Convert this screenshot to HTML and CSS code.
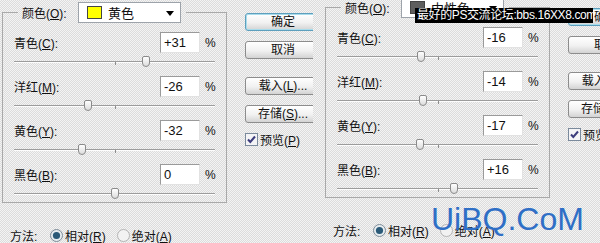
FILE: index.html
```html
<!DOCTYPE html>
<html lang="zh-CN">
<head>
  <meta charset="UTF-8">
  <title>可选颜色</title>
  <link rel="stylesheet" href="styles.css">
</head>
<body>

<div class="shot">
  <!-- first dialog: yellows -->
  <div class="pane pane-left">
    <div class="dlg">
      <div class="dlg-top">
        <fieldset class="group">
          <legend class="group-head">
            <span class="head-lbl">颜色(<u>O</u>):</span>
            <span class="combo"><i class="swatch swatch-yellow"></i><span class="combo-text">黄色</span><b class="combo-arrow"></b></span>
          </legend>
          <div class="row"><span class="lbl">青色(<u>C</u>):</span><span class="num">+31</span><span class="pct">%</span></div>
          <div class="slider"><i class="tick"></i><i class="thumb" style="left:65.5%"></i></div>
          <div class="row"><span class="lbl">洋红(<u>M</u>):</span><span class="num">-26</span><span class="pct">%</span></div>
          <div class="slider"><i class="tick"></i><i class="thumb" style="left:37%"></i></div>
          <div class="row"><span class="lbl">黄色(<u>Y</u>):</span><span class="num">-32</span><span class="pct">%</span></div>
          <div class="slider"><i class="tick"></i><i class="thumb" style="left:34%"></i></div>
          <div class="row"><span class="lbl">黑色(<u>B</u>):</span><span class="num">0</span><span class="pct">%</span></div>
          <div class="slider"><i class="tick"></i><i class="thumb" style="left:50%"></i></div>
        </fieldset>
        <div class="btns">
          <div class="btn btn-default">确定</div>
          <div class="btn">取消</div>
          <div class="btn btn-gap">载入(<u>L</u>)...</div>
          <div class="btn">存储(<u>S</u>)...</div>
          <div class="check">
            <svg class="box" width="13" height="13" viewBox="0 0 13 13"><rect x="0.5" y="0.5" width="12" height="12" fill="#f4f4f6" stroke="#7b8a9c"/><path d="M3 6.5 L5.3 9 L10 3.5" fill="none" stroke="#3c3c7c" stroke-width="2"/></svg>
            <span>预览(<u>P</u>)</span>
          </div>
        </div>
      </div>
      <div class="method">
        <span class="method-lbl">方法:</span>
        <svg class="radio" width="13" height="13" viewBox="0 0 13 13"><circle cx="6.5" cy="6.5" r="6" fill="#e6ecef" stroke="#7d8b97"/><circle cx="6.5" cy="6.5" r="3.6" fill="#2b5a78"/></svg>
        <span>相对(<u>R</u>)</span>
        <svg class="radio radio-2" width="13" height="13" viewBox="0 0 13 13"><circle cx="6.5" cy="6.5" r="6" fill="#f2f2f2" stroke="#b4b4b4"/></svg>
        <span>绝对(<u>A</u>)</span>
      </div>
    </div>
  </div>

  <!-- second dialog: neutrals -->
  <div class="pane pane-right">
    <div class="dlg dlg-shift">
      <div class="dlg-top">
        <fieldset class="group">
          <legend class="group-head">
            <span class="head-lbl">颜色(<u>O</u>):</span>
            <span class="combo"><i class="swatch swatch-gray"></i><span class="combo-text">中性色</span><b class="combo-arrow"></b></span>
          </legend>
          <div class="row"><span class="lbl">青色(<u>C</u>):</span><span class="num">-16</span><span class="pct">%</span></div>
          <div class="slider"><i class="tick"></i><i class="thumb" style="left:42%"></i></div>
          <div class="row"><span class="lbl">洋红(<u>M</u>):</span><span class="num">-14</span><span class="pct">%</span></div>
          <div class="slider"><i class="tick"></i><i class="thumb" style="left:43%"></i></div>
          <div class="row"><span class="lbl">黄色(<u>Y</u>):</span><span class="num">-17</span><span class="pct">%</span></div>
          <div class="slider"><i class="tick"></i><i class="thumb" style="left:41.5%"></i></div>
          <div class="row"><span class="lbl">黑色(<u>B</u>):</span><span class="num">+16</span><span class="pct">%</span></div>
          <div class="slider"><i class="tick"></i><i class="thumb" style="left:58%"></i></div>
        </fieldset>
        <div class="btns">
          <div class="btn btn-default">确定</div>
          <div class="btn">取消</div>
          <div class="btn btn-gap">载入(<u>L</u>)...</div>
          <div class="btn">存储(<u>S</u>)...</div>
          <div class="check">
            <svg class="box" width="13" height="13" viewBox="0 0 13 13"><rect x="0.5" y="0.5" width="12" height="12" fill="#f4f4f6" stroke="#7b8a9c"/><path d="M3 6.5 L5.3 9 L10 3.5" fill="none" stroke="#3c3c7c" stroke-width="2"/></svg>
            <span>预览(<u>P</u>)</span>
          </div>
        </div>
      </div>
      <div class="method">
        <span class="method-lbl">方法:</span>
        <svg class="radio" width="13" height="13" viewBox="0 0 13 13"><circle cx="6.5" cy="6.5" r="6" fill="#e6ecef" stroke="#7d8b97"/><circle cx="6.5" cy="6.5" r="3.6" fill="#2b5a78"/></svg>
        <span>相对(<u>R</u>)</span>
        <svg class="radio radio-2" width="13" height="13" viewBox="0 0 13 13"><circle cx="6.5" cy="6.5" r="6" fill="#f2f2f2" stroke="#b4b4b4"/></svg>
        <span>绝对(<u>A</u>)</span>
      </div>
    </div>
  </div>

  <div class="watermark">最好的PS交流论坛:bbs.16XX8.com</div>
  <div class="logo">UiBQ.CoM</div>
</div>

</body>
</html>
```

FILE: styles.css
```css
body {
  margin: 0;
  font-family: "Liberation Sans", "Noto Sans CJK SC", sans-serif;
  font-size: 12px;
  color: #111;
}
.shot {
  position: relative;
  display: flex;
  width: 600px;
  height: 243px;
  overflow: hidden;
  background: #e9e9e9 repeating-conic-gradient(#dcdcdc 0 25%, #f4f4f4 0 50%) 0 0 / 2px 2px;
}
.pane {
  height: 243px;
  overflow: hidden;
}
.pane-left {
  width: 313px;
  flex: none;
}
.pane-right {
  flex: 1;
}
.dlg {
  width: 330px;
  padding-top: 2px;
}
.dlg-shift {
  margin: -5px 0 0 10px;
}
.dlg-top {
  display: flex;
  align-items: flex-start;
}
u {
  text-decoration: underline;
  text-underline-offset: 1px;
}

/* group box */
.group {
  margin: 0 0 0 2px;
  padding: 9px 11px 0 11px;
  width: 201px;
  border: 1px solid #a9a9a9;
  min-inline-size: 0;
}
.group-head {
  display: flex;
  align-items: center;
  height: 21px;
  margin-left: 4px;
  padding: 0 5px 0 4px;
}
.head-lbl {
  width: 56px;
}
.combo {
  display: flex;
  align-items: center;
  box-sizing: border-box;
  width: 103px;
  height: 21px;
  padding-left: 8px;
  background: #fff;
  border: 1px solid #9da3aa;
}
.swatch {
  width: 13px;
  height: 11px;
  border: 1px solid #444;
}
.swatch-yellow {
  background: #ffff00;
}
.swatch-gray {
  background: #5e5e5e;
}
.combo-text {
  margin-left: 6px;
  font-size: 13px;
}
.combo-arrow {
  margin: 1px 6px 0 auto;
  border-top: 5px solid #000;
  border-left: 4px solid transparent;
  border-right: 4px solid transparent;
}

/* value rows */
.row {
  display: flex;
  align-items: center;
  height: 21px;
}
.lbl {
  flex: 1;
}
.num {
  box-sizing: border-box;
  width: 40px;
  height: 21px;
  margin-right: 5px;
  padding-left: 3px;
  line-height: 19px;
  font-size: 13px;
  background: #fff;
  border: 1px solid #b2b2b2;
  border-color: #9a9a9a #e2e2e2 #e2e2e2 #9a9a9a;
}
.pct {
  width: 10px;
}
.slider {
  position: relative;
  height: 23px;
}
.slider:last-child {
  height: 17px;
}
.slider::before {
  content: "";
  position: absolute;
  left: 0;
  right: 0;
  top: 8px;
  border-top: 1px solid #9c9c9c;
  border-bottom: 1px solid #fdfdfd;
}
.tick {
  position: absolute;
  left: 50%;
  top: 9px;
  width: 1px;
  height: 3px;
  background: #8c8c8c;
}
.thumb {
  position: absolute;
  top: 3px;
  width: 8px;
  height: 11px;
  transform: translateX(-50%);
  box-sizing: border-box;
  border: 1px solid #8a8a8a;
  border-radius: 2px 2px 4px 4px;
  background: linear-gradient(#ffffff, #dcdcdc);
}

/* buttons */
.btns {
  margin-left: 18px;
  padding-top: 11px;
}
.btn {
  box-sizing: border-box;
  width: 76px;
  height: 18px;
  margin-bottom: 10px;
  line-height: 16px;
  text-align: center;
  border: 1px solid #8c8c8c;
  border-radius: 3px;
  background: linear-gradient(#ffffff, #f1f1f1 55%, #d3d3d3);
}
.btn-default {
  border-color: #5d9fbd;
  box-shadow: inset 0 0 0 1px #a8dcec;
}
.btn-gap {
  margin-top: 18px;
}
.check {
  display: flex;
  align-items: center;
  margin-top: 5px;
  height: 13px;
}
.check .box {
  margin-right: 2px;
}

/* method */
.method {
  display: flex;
  align-items: center;
  height: 14px;
  margin-top: 25px;
  padding-left: 10px;
}
.method-lbl {
  width: 40px;
}
.radio {
  margin-right: 2px;
}
.radio-2 {
  margin-left: 11px;
}

/* overlays */
.watermark {
  position: absolute;
  left: 415px;
  top: 8px;
  width: 178px;
  height: 15px;
  padding-left: 2px;
  box-sizing: border-box;
  line-height: 15px;
  letter-spacing: -0.4px;
  white-space: nowrap;
  overflow: hidden;
  color: #fff;
  background: #000;
}
.logo {
  position: absolute;
  left: 431px;
  top: 203px;
  font-size: 32px;
  line-height: 32px;
  color: #2f6fc6;
}
```
